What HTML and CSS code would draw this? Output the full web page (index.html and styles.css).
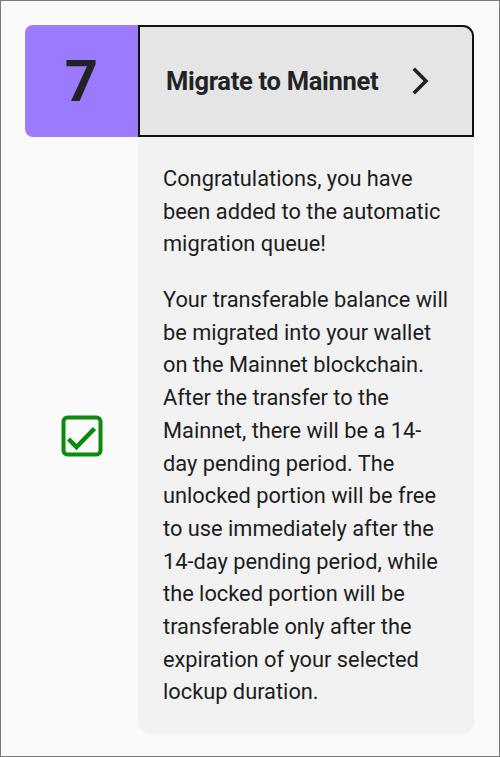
FILE: index.html
```html
<!DOCTYPE html>
<html>
<head>
<meta charset="utf-8">
<link rel="stylesheet" href="styles.css">
</head>
<body>
<div class="frame">
  <div class="step">
    <div class="num">7</div>
    <div class="head">
      <span class="title">Migrate to Mainnet</span>
      <svg class="chev" width="18" height="28" viewBox="0 0 18 28"><path d="M3 3 L14 14 L3 25" fill="none" stroke="#222" stroke-width="3.6" stroke-linecap="square"/></svg>
    </div>
    <div class="status">
      <svg width="42" height="42" viewBox="0 0 42 42"><rect x="2.5" y="2.5" width="37" height="37" rx="4" fill="none" stroke="#0b8a0b" stroke-width="4"/><path d="M7.5 24 L15.5 32 L33.5 13.5" fill="none" stroke="#0b8a0b" stroke-width="4.5"/></svg>
    </div>
    <div class="body">
      <p>Congratulations, you have been added to the automatic migration queue!</p>
      <p>Your transferable balance will be migrated into your wallet on the Mainnet blockchain. After the transfer to the Mainnet, there will be a 14-day pending period. The unlocked portion will be free to use immediately after the 14-day pending period, while the locked portion will be transferable only after the expiration of your selected lockup duration.</p>
    </div>
  </div>
</div>
</body>
</html>
```
FILE: styles.css
```css
html, body { margin: 0; padding: 0; }
body { font-family: Roboto, "Liberation Sans", sans-serif; background: #fafafa; }
.frame {
  box-sizing: border-box;
  width: 500px;
  height: 757px;
  border: 1px solid #7a7a7a;
  padding: 24px 0 0 24px;
}
.step {
  display: grid;
  grid-template-columns: 113px 336px;
}
.num {
  background: #9b7bfb;
  border-radius: 8px 0 0 8px;
  height: 112px;
  display: flex;
  align-items: center;
  justify-content: center;
  font-size: 58px;
  font-weight: 700;
  color: #212326;
}
.head {
  box-sizing: border-box;
  height: 112px;
  background: #e5e5e5;
  border: 2px solid #111;
  border-top-right-radius: 11px;
  display: flex;
  align-items: center;
  justify-content: space-between;
  padding: 0 42px 0 26px;
}
.title {
  font-size: 25.5px;
  font-weight: 700;
  color: #212326;
  letter-spacing: -0.3px;
}
.chev { display: block; }
.status {
  display: flex;
  align-items: center;
  justify-content: center;
}
.body {
  background: #f2f2f2;
  border-radius: 0 0 12px 12px;
  padding: 26px 24px 25px 25px;
}
.body p {
  margin: 0;
  font-size: 21.8px;
  line-height: 1.5;
  color: #1d1d1d;
}
.body p + p { margin-top: 23px; }
```
